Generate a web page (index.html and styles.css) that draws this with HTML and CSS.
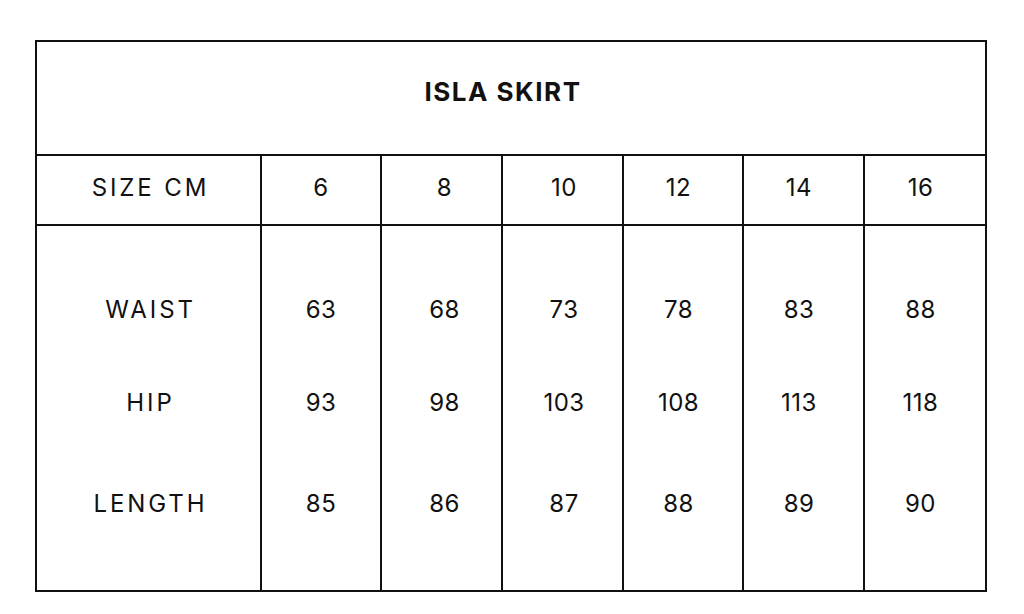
FILE: index.html
```html
<!DOCTYPE html>
<html>
<head>
<meta charset="utf-8">
<link rel="stylesheet" href="styles.css">
</head>
<body>
<div class="chart">
  <div class="title">ISLA SKIRT</div>
  <div class="cell head label">SIZE CM</div>
  <div class="cell head">6</div>
  <div class="cell head shift-r">8</div>
  <div class="cell head shift-r-sm">10</div>
  <div class="cell head shift-l">12</div>
  <div class="cell head shift-l">14</div>
  <div class="cell head shift-l">16</div>
  <div class="col label"><span class="r1">WAIST</span><span class="r2">HIP</span><span class="r3">LENGTH</span></div>
  <div class="col"><span class="r1">63</span><span class="r2">93</span><span class="r3">85</span></div>
  <div class="col shift-r"><span class="r1">68</span><span class="r2">98</span><span class="r3">86</span></div>
  <div class="col shift-r-sm"><span class="r1">73</span><span class="r2">103</span><span class="r3">87</span></div>
  <div class="col shift-l"><span class="r1">78</span><span class="r2">108</span><span class="r3">88</span></div>
  <div class="col shift-l"><span class="r1">83</span><span class="r2">113</span><span class="r3">89</span></div>
  <div class="col shift-l"><span class="r1">88</span><span class="r2">118</span><span class="r3">90</span></div>
</div>
</body>
</html>
```
FILE: styles.css
```css
html, body {
  margin: 0;
  padding: 0;
  background: #fff;
}
body {
  font-family: Inter, "Liberation Sans", sans-serif;
  color: #111;
}
.chart {
  margin: 40px 0 0 35px;
  width: 952px;
  display: grid;
  grid-template-columns: 223px 118px 119px 119px 118px 119px 120px;
  grid-template-rows: 112px 68px 364px;
  gap: 2px;
  padding: 2px;
  box-sizing: border-box;
  background: #111;
}
.title {
  grid-column: 1 / -1;
  background: #fff;
  display: flex;
  align-items: center;
  justify-content: center;
  font-weight: 700;
  font-size: 26px;
  letter-spacing: 1.5px;
  padding: 0 16px 13px 0;
}
.cell {
  background: #fff;
  display: flex;
  align-items: center;
  justify-content: center;
  font-size: 24px;
  letter-spacing: 0.5px;
  padding-bottom: 5px;
}
.col {
  background: #fff;
  display: flex;
  flex-direction: column;
  align-items: center;
  font-size: 24px;
  letter-spacing: 0.5px;
  padding-top: 69px;
}
.chart .label {
  letter-spacing: 2.9px;
  padding-left: 4px;
}
.chart .shift-r { padding-left: 6px; }
.chart .shift-r-sm { padding-left: 3px; }
.chart .shift-l { padding-right: 9px; }
.col span {
  line-height: 30px;
  height: 30px;
}
.col .r2 { margin-top: 63px; }
.col .r3 { margin-top: 71px; }
```
